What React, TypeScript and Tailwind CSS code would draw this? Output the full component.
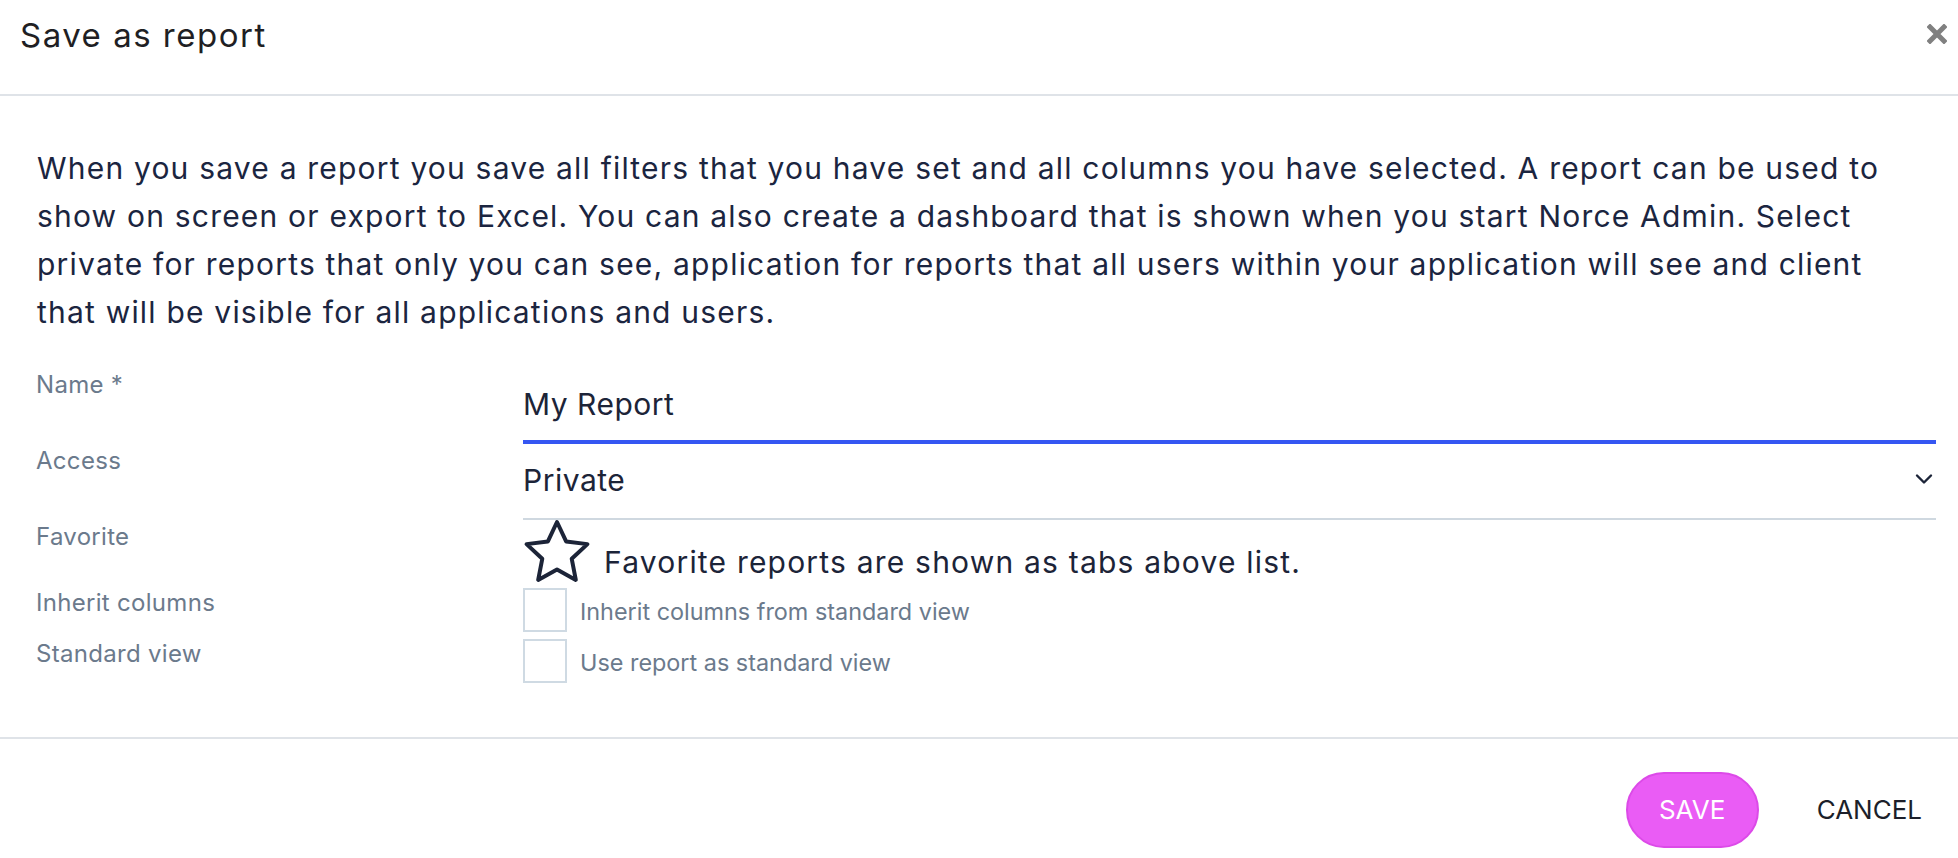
import React from 'react';

const font = "font-['Inter',sans-serif]";

function CloseIcon() {
  return (
    <svg width="20" height="20" viewBox="0 0 20 20" aria-hidden="true">
      <path d="M3 3 L17 17 M17 3 L3 17" stroke="#808080" strokeWidth="5" strokeLinecap="square" />
    </svg>
  );
}

function StarIcon() {
  // outline star, fat inner radius like the reference
  return (
    <svg width="70" height="66" viewBox="0 0 70 66" aria-hidden="true" className="shrink-0">
      <polygon
        points="35,3 44.11,22.46 65.43,25.11 49.74,39.79 53.81,60.89 35,50.5 16.19,60.89 20.26,39.79 4.57,25.11 25.89,22.46"
        fill="none"
        stroke="#1c2438"
        strokeWidth="4"
        strokeLinejoin="round"
      />
    </svg>
  );
}

function ChevronDown() {
  return (
    <svg width="18" height="12" viewBox="0 0 18 12" aria-hidden="true">
      <path d="M2 2.5 L9 9.5 L16 2.5" fill="none" stroke="#1c2438" strokeWidth="2.4" strokeLinecap="round" strokeLinejoin="round" />
    </svg>
  );
}

function Label({ children }: { children: React.ReactNode }) {
  return <div className="pt-[2px] text-[24px] leading-[30px] tracking-[0.3px] text-[#6b7a8c]">{children}</div>;
}

function CheckRow({ text }: { text: string }) {
  return (
    <div className="flex h-[51px] items-start gap-[13px]">
      <div className="mt-[2px] h-[44px] w-[44px] shrink-0 border-2 border-[#cfdae3] bg-white" />
      <span className="mt-[11px] text-[23.4px] leading-[30px] text-[#6b7a8c]">{text}</span>
    </div>
  );
}

export default function App() {
  return (
    <div className={`min-h-screen w-full bg-white ${font}`}>
      {/* header */}
      <div className="flex h-[96px] items-start justify-between border-b-2 border-[#dfe3e8] pl-[20px] pr-[11px]">
        <h1 className="pt-[15px] text-[33px] leading-[40px] font-normal tracking-[1.5px] text-[#1f1f24]">Save as report</h1>
        <button className="mt-[24px]">
          <CloseIcon />
        </button>
      </div>

      {/* body */}
      <div className="pt-[48px] pb-[49px]">
        <p className="px-[37px] text-[30px] leading-[48px] tracking-[1.2px] text-[#1b2540]">
          When you save a report you save all filters that you have set and all columns you have selected. A report can be used to
          show on screen or export to Excel. You can also create a dashboard that is shown when you start Norce Admin. Select
          private for reports that only you can see, application for reports that all users within your application will see and client
          that will be visible for all applications and users.
        </p>

        <div className="mt-[32px] grid grid-cols-[487px_1fr] pl-[36px] pr-[22px]">
          <Label>Name *</Label>
          <div className="border-b-4 border-[#3556f2] pt-[18px] pb-[18px] text-[30px] leading-[36px] tracking-[0.5px] text-[#1c2438]">
            My Report
          </div>

          <Label>Access</Label>
          <div className="flex items-center justify-between border-b-2 border-[#cfd8e0] pt-[18px] pb-[20px] text-[30px] leading-[36px] tracking-[0.5px] text-[#1c2438]">
            <span>Private</span>
            <span className="mr-[3px] mt-[-2px]">
              <ChevronDown />
            </span>
          </div>

          <Label>Favorite</Label>
          <div className="flex h-[66px] items-start gap-[12px]">
            <div className="-ml-[1px] -mt-[1px]">
              <StarIcon />
            </div>
            <span className="mt-[24px] text-[30px] leading-[36px] tracking-[1.2px] text-[#1c2438]">
              Favorite reports are shown as tabs above list.
            </span>
          </div>

          <Label>Inherit columns</Label>
          <CheckRow text="Inherit columns from standard view" />

          <Label>Standard view</Label>
          <CheckRow text="Use report as standard view" />
        </div>
      </div>

      {/* footer */}
      <div className="flex items-start justify-end gap-[38px] border-t-2 border-[#dfe3e8] pt-[33px] pr-[16px] pb-[33px]">
        <button className="h-[76px] w-[133px] rounded-full border-2 border-[#dc4ae8] bg-[#ea5cf5] text-[26px] leading-none text-white">
          SAVE
        </button>
        <button className="h-[76px] px-[20px] text-[26px] leading-none text-[#1c1f2a]">CANCEL</button>
      </div>
    </div>
  );
}
